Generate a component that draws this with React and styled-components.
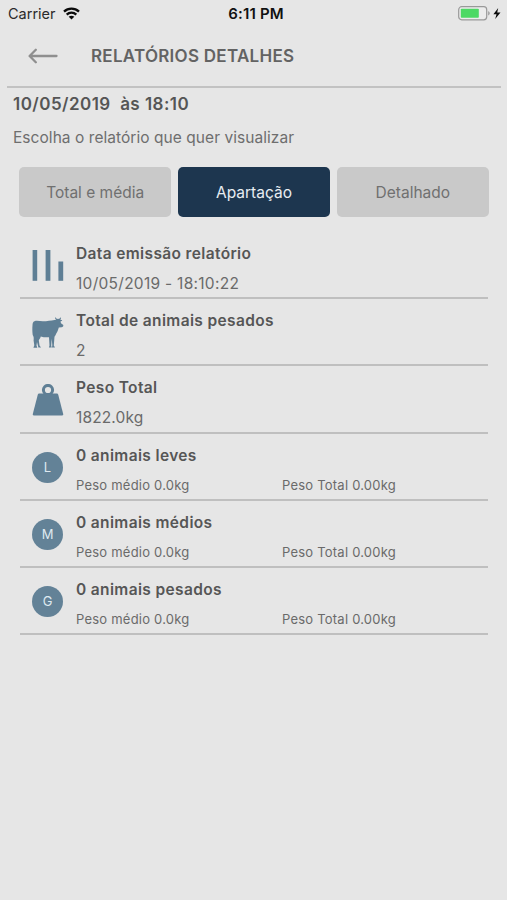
import styled, { createGlobalStyle } from "styled-components";

const GlobalStyle = createGlobalStyle`
    * {
        box-sizing: border-box;
    }

    body {
        margin: 0;
        background-color: #e6e6e6;
        font-family: Inter, "Liberation Sans", sans-serif;
        color: #6a6a6a;
    }
`;

const tabs = ["Total e média", "Apartação", "Detalhado"];

const summary = [
    {
        icon: "bars",
        title: "Data emissão relatório",
        value: "10/05/2019 - 18:10:22",
        spacing: 0.28,
    },
    {
        icon: "cow",
        title: "Total de animais pesados",
        value: "2",
    },
    {
        icon: "weight",
        title: "Peso Total",
        value: "1822.0kg",
        spacing: 0.14,
    },
];

const groups = [
    { letter: "L", title: "0 animais leves" },
    { letter: "M", title: "0 animais médios" },
    { letter: "G", title: "0 animais pesados" },
];

const WifiIcon = () => (
    <svg width="17" height="13" viewBox="0 0 17 13">
        <g fill="none" stroke="#0a0a0a" strokeWidth="2.3">
            <path d="M1 4.6C5.2 0.7 11.8 0.7 16 4.6" />
            <path d="M3.7 7.6C6.4 5 10.6 5 13.3 7.6" />
        </g>
        <path d="M8.5 12.6L5.7 9.8C7.2 8.4 9.8 8.4 11.3 9.8Z" fill="#0a0a0a" />
    </svg>
);

const BatteryIcon = () => (
    <svg width="43" height="15" viewBox="0 0 43 15">
        <rect
            x="0.7"
            y="0.7"
            width="28"
            height="13.1"
            rx="3"
            fill="#ececec"
            stroke="#999"
            strokeWidth="1.2"
        />
        <rect x="2.8" y="2.8" width="18" height="8.9" rx="0.8" fill="#4cd964" />
        <path d="M30.2 5.2C32.2 5.8 32.2 8.8 30.2 9.4Z" fill="#999" />
        <path d="M40.2 2L35.4 8.2H38.5L37.2 13L42.5 6.4H39.2Z" fill="#0a0a0a" />
    </svg>
);

const BackIcon = () => (
    <svg width="30" height="16" viewBox="0 0 30 16">
        <path
            d="M28.5 8H2M7.8 1.8L1.6 8L7.8 14.2"
            fill="none"
            stroke="#8f8f8f"
            strokeWidth="2.3"
            strokeLinecap="round"
            strokeLinejoin="round"
        />
    </svg>
);

const BarsIcon = () => (
    <svg width="32" height="32" viewBox="0 0 32 32" fill="#5f7f95">
        <rect x="0.6" y="0" width="4.6" height="30.8" />
        <rect x="13.6" y="0" width="4.8" height="30.8" />
        <rect x="26.4" y="11.5" width="4.8" height="19.3" />
    </svg>
);

const CowIcon = () => (
    <svg width="32" height="32" viewBox="0 0 32 32" fill="#5f7f95">
        <path d="M2.4 4.2C5 3.4 8 4.3 11 4.3C15 4.3 19 3.6 22.5 3L24.3 2.7C23.2 2.2 22.9 1.2 23.2 0.1C23.8 1.4 24.8 1.9 26 1.9C27.3 1.9 28.3 1.5 28.4 0C29.3 1.2 29 2.3 28.2 3L30.2 3.1C29.9 4.1 29.2 4.5 28.5 4.6L29 6.2L31.3 8C31.5 9.3 30.8 10.2 29.7 10.3L26.8 10.4C26.2 12.4 25.6 14.5 24.4 16.2C23.8 17.8 23.2 19 22.5 19.8L21.8 28.4L23 30.6H20L20.3 28L19.7 21.8L19.2 28.8L19.8 30.6H16.9L17.5 28.4L17 20.2C14.4 20.6 11.2 20.2 8.8 19.4C8.3 21 7.2 22.2 6.8 23.2L7.5 28.4L9 30.5H6.4L5 25L4.5 28.4L5.3 30.7H1.4L2.3 28.2L1.6 23.4C1.9 21.3 1.8 19.6 0.7 18C0.3 14.5 0.2 11 0.5 8.2C0.6 6 1 4.8 2.4 4.2Z" />
    </svg>
);

const WeightIcon = () => (
    <svg width="32" height="32" viewBox="0 0 32 32" fill="#5f7f95">
        <circle
            cx="16"
            cy="6"
            r="4.6"
            fill="none"
            stroke="#5f7f95"
            strokeWidth="3"
        />
        <path d="M7.6 9.6H24.4C25.5 9.6 26 10 26.3 11L31.2 30C31.4 31 31 31.4 30.2 31.4H1.8C1 31.4 0.6 31 0.8 30L5.7 11C6 10 6.5 9.6 7.6 9.6Z" />
    </svg>
);

const icons = { bars: BarsIcon, cow: CowIcon, weight: WeightIcon };

const SummaryRow = ({ icon, title, value, spacing }) => {
    const Icon = icons[icon];

    return (
        <Row>
            <IconCell>
                <Icon />
            </IconCell>
            <RowBody>
                <RowTitle>{title}</RowTitle>
                <RowValue $spacing={spacing}>{value}</RowValue>
            </RowBody>
        </Row>
    );
};

const GroupRow = ({ letter, title }) => (
    <Row>
        <IconCell>
            <Badge>{letter}</Badge>
        </IconCell>
        <RowBody>
            <RowTitle>{title}</RowTitle>
            <Weights>
                <span>Peso médio 0.0kg</span>
                <span>Peso Total 0.00kg</span>
            </Weights>
        </RowBody>
    </Row>
);

const App = () => {
    return (
        <>
            <GlobalStyle />
            <Screen>
                <StatusBar>
                    <Carrier>
                        Carrier <WifiIcon />
                    </Carrier>
                    <Clock>6:11 PM</Clock>
                    <BatteryIcon />
                </StatusBar>
                <Header>
                    <BackIcon />
                    <Heading>RELATÓRIOS DETALHES</Heading>
                </Header>
                <Intro>
                    <DateLine>{"10/05/2019  às 18:10"}</DateLine>
                    <Hint>Escolha o relatório que quer visualizar</Hint>
                </Intro>
                <Tabs>
                    {tabs.map((tab) => (
                        <Tab key={tab} $active={tab === "Apartação"}>
                            {tab}
                        </Tab>
                    ))}
                </Tabs>
                <List>
                    {summary.map((item) => (
                        <SummaryRow key={item.title} {...item} />
                    ))}
                    {groups.map((group) => (
                        <GroupRow key={group.letter} {...group} />
                    ))}
                </List>
            </Screen>
        </>
    );
};

const Screen = styled.main`
    width: 507px;
    height: 900px;
    overflow: hidden;
    background-color: #e6e6e6;
`;

const StatusBar = styled.div`
    display: grid;
    grid-template-columns: 1fr auto 1fr;
    align-items: center;
    height: 27px;
    padding: 0 6px 0 8px;
    color: #111;

    > svg {
        justify-self: end;
    }
`;

const Carrier = styled.div`
    display: flex;
    align-items: center;
    gap: 7px;
    font-size: 14.5px;
    color: #2a2a2a;
`;

const Clock = styled.div`
    font-size: 15px;
    font-weight: 600;
    letter-spacing: 0.15px;
    margin-left: 3px;
`;

const Header = styled.header`
    display: flex;
    align-items: center;
    gap: 33px;
    height: 61px;
    margin: 0 6px 0 7px;
    padding: 0 0 2px 21px;
    border-bottom: 2px solid #c2c2c2;
`;

const Heading = styled.h1`
    margin: 0;
    font-size: 17px;
    font-weight: 600;
    line-height: 20px;
    letter-spacing: 0.27px;
    color: #636363;
`;

const Intro = styled.section`
    padding: 6px 13px 0;
`;

const DateLine = styled.p`
    margin: 0;
    font-size: 17px;
    font-weight: 600;
    line-height: 20px;
    letter-spacing: 0.46px;
    color: #555;
    white-space: pre;
`;

const Hint = styled.p`
    margin: 14px 0 0;
    font-size: 15.5px;
    line-height: 20px;
    letter-spacing: 0.05px;
    color: #6e6e6e;
`;

const Tabs = styled.nav`
    display: grid;
    grid-template-columns: repeat(3, 1fr);
    gap: 6.5px;
    margin: 19px 18px 0 19px;
`;

const Tab = styled.button`
    height: 50px;
    padding: 0;
    border: 0;
    border-radius: 5px;
    background-color: ${({ $active }) => ($active ? "#1d364f" : "#c9c9c9")};
    color: ${({ $active }) => ($active ? "#e8edf2" : "#707070")};
    font-family: inherit;
    font-size: 15.5px;
`;

const List = styled.ul`
    margin: 15px 19px 0 20px;
    padding: 0;
    list-style: none;
`;

const Row = styled.li`
    display: flex;
    height: 67.2px;
    border-bottom: 2px solid #bfbfbf;
`;

const IconCell = styled.div`
    flex: none;
    width: 56px;
    padding: 18px 0 0 12px;
`;

const Badge = styled.div`
    display: flex;
    align-items: center;
    justify-content: center;
    width: 31px;
    height: 31px;
    border-radius: 50%;
    background-color: #638297;
    color: #dfe9f0;
    font-size: 13px;
`;

const RowBody = styled.div`
    flex: 1;
    padding-top: 12px;
`;

const RowTitle = styled.h2`
    margin: 0;
    font-size: 15.5px;
    font-weight: 600;
    line-height: 20px;
    letter-spacing: 0.36px;
    color: #565656;
`;

const RowValue = styled.p`
    margin: 10px 0 0;
    font-size: 15.5px;
    line-height: 20px;
    letter-spacing: ${({ $spacing }) => $spacing || 0}px;
    color: #6a6a6a;
`;

const Weights = styled.div`
    display: grid;
    grid-template-columns: 1fr 1fr;
    margin-top: 9px;
    font-size: 13px;
    line-height: 20px;
    letter-spacing: 0.22px;
    color: #6a6a6a;
`;

export default App;
